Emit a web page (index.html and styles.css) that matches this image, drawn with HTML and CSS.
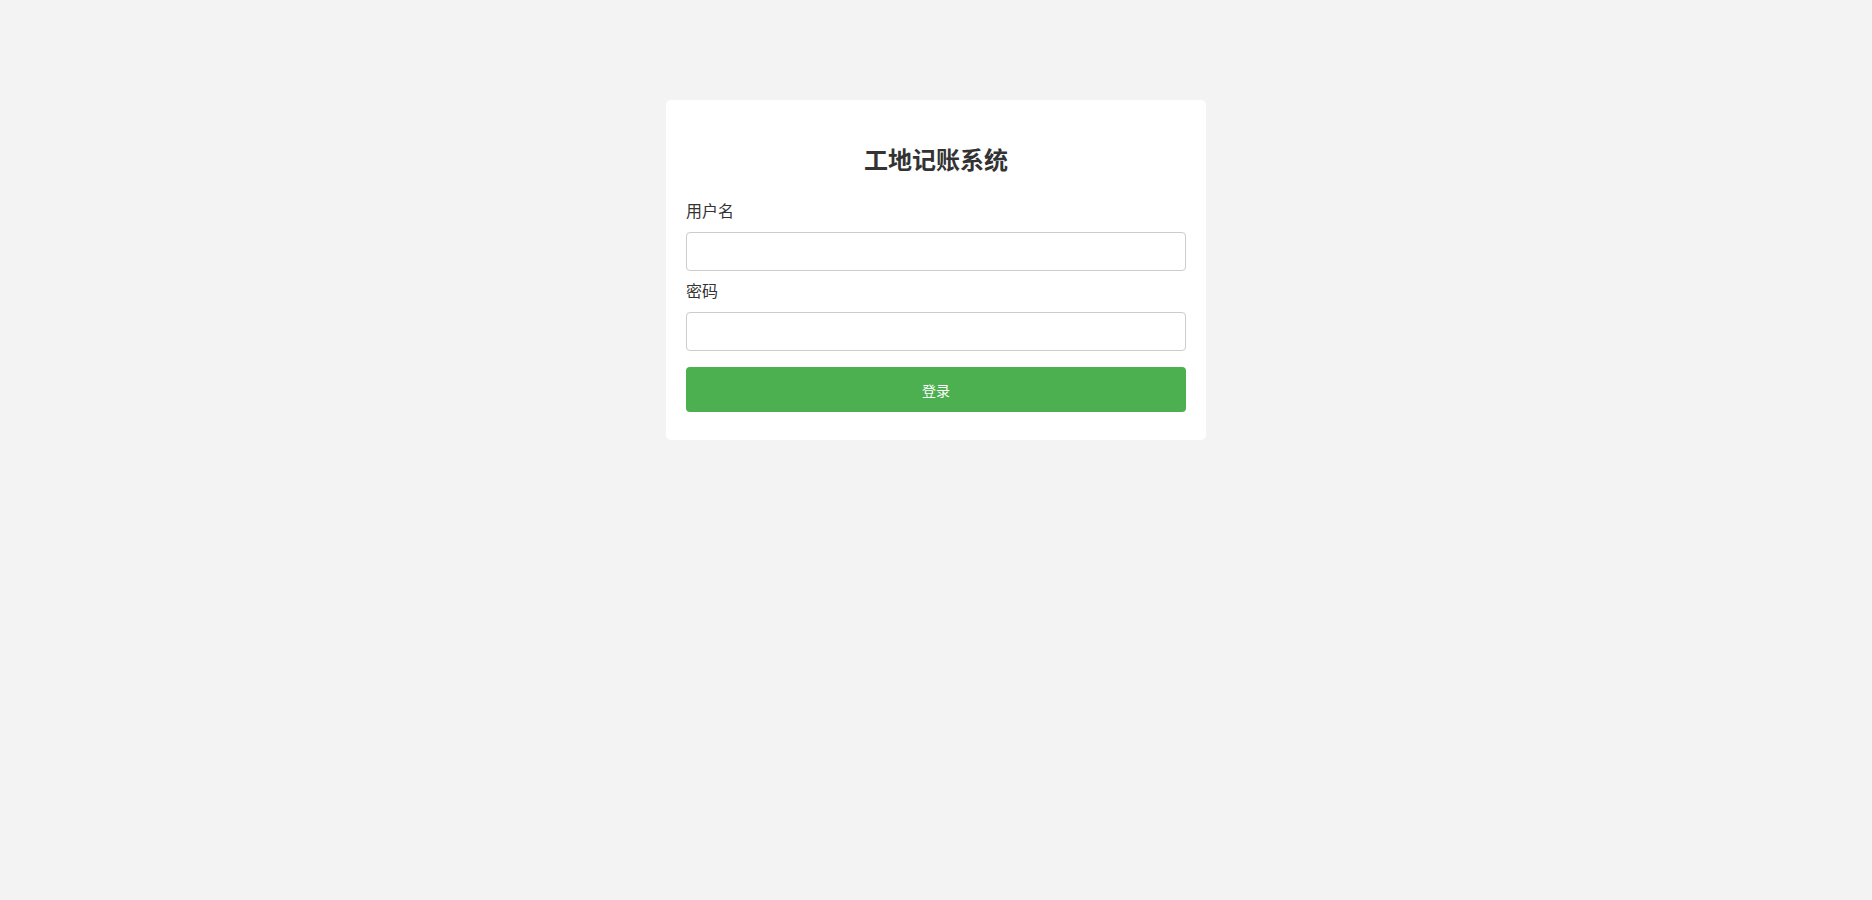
FILE: index.html
```html
<!DOCTYPE html>
<html lang="zh-CN">
<head>
<meta charset="utf-8">
<title>工地记账系统</title>
<link rel="stylesheet" href="styles.css">
</head>
<body>
<div class="page">
  <div class="card">
    <h2 class="title">工地记账系统</h2>
    <form class="form">
      <div class="group">
        <label class="label" for="u">用户名</label>
        <input class="input" id="u" type="text">
      </div>
      <div class="group">
        <label class="label" for="p">密码</label>
        <input class="input" id="p" type="password">
      </div>
      <button class="btn" type="button">登录</button>
    </form>
  </div>
</div>
</body>
</html>
```

FILE: styles.css
```css
* { box-sizing: border-box; }
html, body {
  margin: 0;
  padding: 0;
  background: #f3f3f3;
  font-family: "Noto Sans CJK SC", "Noto Sans", "Liberation Sans", sans-serif;
  color: #333;
}
.page {
  display: flex;
  justify-content: center;
  padding-top: 100px;
}
.card {
  width: 540px;
  background: #fff;
  border-radius: 5px;
  padding: 20px 20px 28px;
}
.title {
  margin: 22px 0;
  font-size: 24px;
  line-height: 34px;
  font-weight: 700;
  text-align: center;
  color: #333;
}
.form {
  display: flex;
  flex-direction: column;
}
.group {
  display: flex;
  flex-direction: column;
  margin-bottom: 7px;
}
.label {
  font-size: 16px;
  line-height: 24px;
  margin-bottom: 10px;
  color: #333;
}
.input {
  height: 39px;
  width: 100%;
  border: 1px solid #ccc;
  border-radius: 4px;
  padding: 0 10px;
  font-size: 16px;
  background: #fff;
  outline: none;
}
.btn {
  margin-top: 9px;
  height: 45px;
  width: 100%;
  border: none;
  border-radius: 4px;
  background: #4caf50;
  color: #fff;
  font-family: "Noto Sans CJK SC", "Noto Sans", sans-serif;
  font-size: 14px;
  cursor: pointer;
}
```
